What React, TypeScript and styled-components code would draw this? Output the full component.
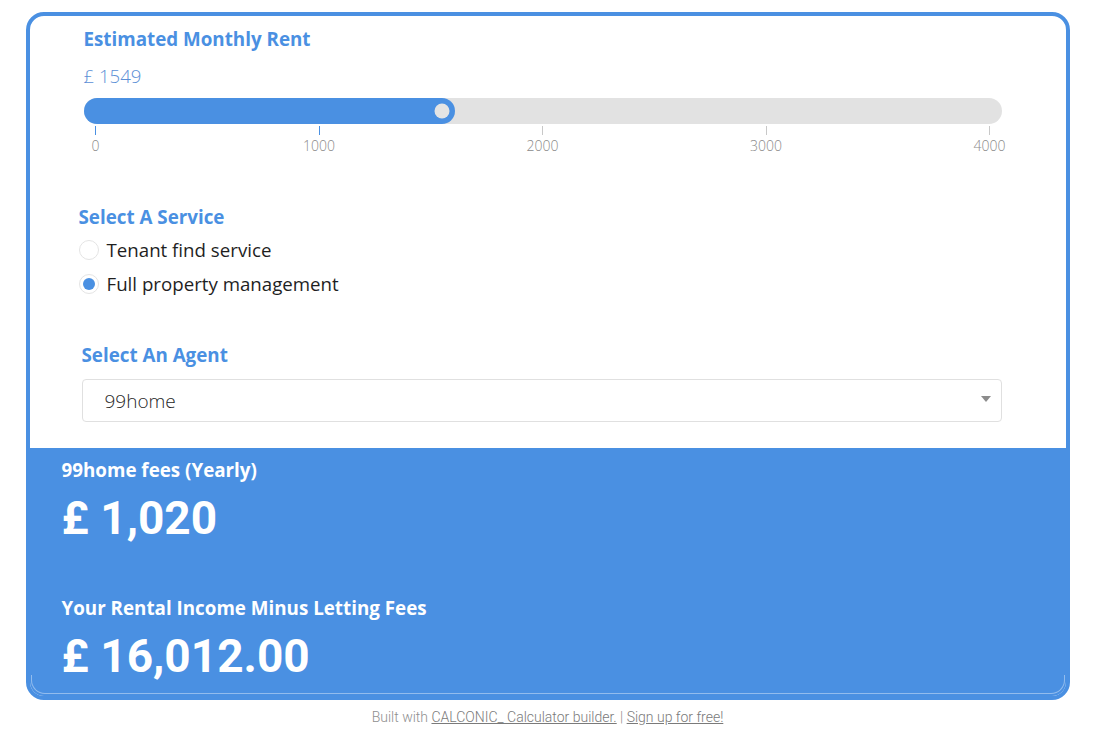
import React from "react";
import styled, { createGlobalStyle } from "styled-components";

const GlobalStyle = createGlobalStyle`
  body {
    margin: 0;
    background: #ffffff;
    font-family: "Open Sans", "Liberation Sans", sans-serif;
  }
`;

const BLUE = "#4a90e2";

export const Page = styled.div`
  display: flex;
  flex-direction: column;
  align-items: center;
  padding-top: 12px;
`;

export const Card = styled.div`
  width: 1044px;
  box-sizing: border-box;
  border: 4px solid ${BLUE};
  border-radius: 18px;
  overflow: hidden;
  background: #ffffff;
`;

export const Inputs = styled.div`
  display: flex;
  flex-direction: column;
  padding: 11px 64px 26px 0;
`;

export const Field = styled.div<{ $left: number; $bottom: number }>`
  display: flex;
  flex-direction: column;
  padding-left: ${(p) => p.$left}px;
  margin-bottom: ${(p) => p.$bottom}px;
`;

export const Label = styled.div`
  font-size: 18.8px;
  font-weight: 700;
  line-height: 24px;
  color: ${BLUE};
`;

export const Value = styled.div`
  font-size: 18.6px;
  font-weight: 300;
  line-height: 24px;
  color: #5b8fd6;
  margin-top: 13px;
`;

export const Track = styled.div`
  position: relative;
  height: 26px;
  border-radius: 13px;
  background: #e2e2e2;
  margin-top: 10px;
`;

export const Fill = styled.div`
  height: 100%;
  border-radius: 13px;
  background: ${BLUE};
`;

export const Thumb = styled.div`
  position: absolute;
  top: 50%;
  width: 15px;
  height: 15px;
  transform: translate(-50%, -50%);
  border-radius: 50%;
  background: #e4e4e4;
`;

export const Scale = styled.div`
  display: flex;
  justify-content: space-between;
  padding: 0 2px;
  margin-top: 2px;
`;

export const Tick = styled.div<{ $active: boolean }>`
  display: flex;
  flex-direction: column;
  align-items: center;
  width: 20px;
  font-size: 14px;
  font-weight: 300;
  line-height: 18px;
  color: #8a8a8a;

  &::before {
    content: "";
    width: 1px;
    height: 9px;
    margin-bottom: 2px;
    background: ${(p) => (p.$active ? BLUE : "#c8c8c8")};
  }
`;

export const Options = styled.div`
  display: flex;
  flex-direction: column;
  gap: 12px;
  margin-top: 10px;
`;

export const Option = styled.label`
  display: flex;
  align-items: center;
  gap: 8px;
  font-size: 18.7px;
  line-height: 22px;
  color: #1f1f1f;
  cursor: pointer;
`;

export const Radio = styled.span<{ $checked: boolean }>`
  position: relative;
  width: 20px;
  height: 20px;
  box-sizing: border-box;
  border-radius: 50%;
  border: 1px solid #e4e4e4;
  background: #ffffff;

  &::after {
    content: "";
    display: ${(p) => (p.$checked ? "block" : "none")};
    position: absolute;
    inset: 3px;
    border-radius: 50%;
    background: ${BLUE};
  }
`;

export const Select = styled.div`
  display: flex;
  align-items: center;
  justify-content: space-between;
  height: 43px;
  box-sizing: border-box;
  margin-top: 12px;
  padding: 0 10px 0 22px;
  border: 1px solid #e0e0e0;
  border-radius: 4px;
  font-size: 19px;
  font-weight: 300;
  color: #1f1f1f;
`;

export const Caret = styled.span`
  width: 0;
  height: 0;
  margin-bottom: 4px;
  border-left: 5px solid transparent;
  border-right: 5px solid transparent;
  border-top: 6px solid #8c8c8c;
`;

export const Results = styled.div`
  position: relative;
  display: flex;
  flex-direction: column;
  padding: 10px 32px 12px;
  background: ${BLUE};
  color: #ffffff;

  &::after {
    content: "";
    position: absolute;
    left: 1px;
    right: 1px;
    bottom: 2px;
    height: 18px;
    border: 1px solid rgba(255, 255, 255, 0.4);
    border-top: none;
    border-radius: 0 0 14px 14px;
    pointer-events: none;
  }
`;

export const ResultLabel = styled.div`
  font-size: 18.8px;
  font-weight: 700;
  line-height: 24px;
`;

export const ResultValue = styled.div<{ $gap: number }>`
  font-family: Roboto, "Liberation Sans", sans-serif;
  font-size: 46px;
  font-weight: 700;
  line-height: 56px;
  margin: 8px 0 ${(p) => p.$gap}px;
`;

export const Footer = styled.div`
  margin-top: 9px;
  font-family: Roboto, "Liberation Sans", sans-serif;
  font-size: 14px;
  font-weight: 300;
  color: #8f8f8f;

  a {
    color: #7a7a7a;
    text-decoration: underline;
  }
`;

const ticks = [0, 1000, 2000, 3000, 4000];

export default function App() {
  const rent = 1549;
  const max = 4000;
  const ratio = rent / max;
  // thumb travels between the first and last tick, 12px in from each end
  const thumbLeft = `calc(12px + (100% - 24px) * ${ratio})`;

  return (
    <Page>
      <GlobalStyle />
      <Card>
        <Inputs>
          <Field $left={54} $bottom={50}>
            <Label>Estimated Monthly Rent</Label>
            <Value>£ {rent}</Value>
            <Track>
              <Fill style={{ width: `calc(25px + (100% - 24px) * ${ratio})` }} />
              <Thumb style={{ left: thumbLeft }} />
            </Track>
            <Scale>
              {ticks.map((t) => (
                <Tick key={t} $active={t <= rent}>
                  {t}
                </Tick>
              ))}
            </Scale>
          </Field>
          <Field $left={49} $bottom={48}>
            <Label>Select A Service</Label>
            <Options>
              <Option>
                <Radio $checked={false} />
                Tenant find service
              </Option>
              <Option>
                <Radio $checked={true} />
                Full property management
              </Option>
            </Options>
          </Field>
          <Field $left={52} $bottom={0}>
            <Label>Select An Agent</Label>
            <Select>
              99home
              <Caret />
            </Select>
          </Field>
        </Inputs>
        <Results>
          <ResultLabel>99home fees (Yearly)</ResultLabel>
          <ResultValue $gap={50}>£ 1,020</ResultValue>
          <ResultLabel>Your Rental Income Minus Letting Fees</ResultLabel>
          <ResultValue $gap={0}>£ 16,012.00</ResultValue>
        </Results>
      </Card>
      <Footer>
        Built with <a>CALCONIC_ Calculator builder.</a> | <a>Sign up for free!</a>
      </Footer>
    </Page>
  );
}
